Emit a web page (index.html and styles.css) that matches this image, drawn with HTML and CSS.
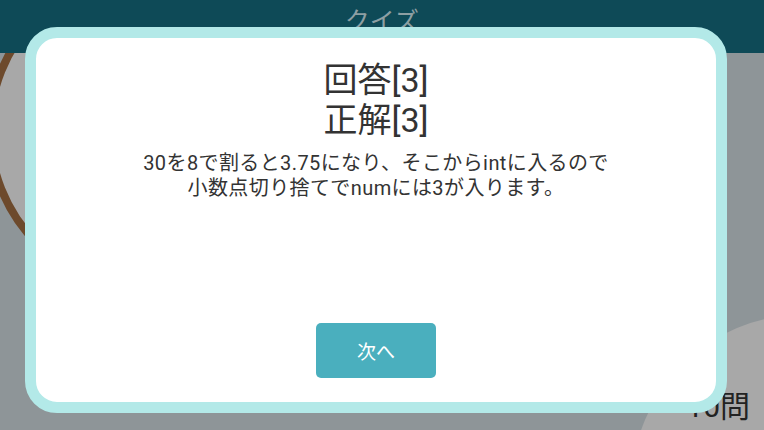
FILE: index.html
```html
<!DOCTYPE html>
<html lang="ja">
<head>
<meta charset="utf-8">
<title>クイズ</title>
<link rel="stylesheet" href="styles.css">
</head>
<body>
<div class="page">
  <header class="app-header">
    <h1 class="app-title">クイズ</h1>
  </header>
  <main class="quiz-main">
    <div class="deco-circle deco-left"></div>
    <div class="deco-circle deco-right"></div>
    <div class="count">10問</div>
  </main>
  <div class="overlay">
    <section class="modal">
      <div class="modal-inner">
        <h2 class="result">回答[3]<br>正解[3]</h2>
        <p class="explain">30を8で割ると3.75になり、そこからintに入るので<br>小数点切り捨てでnumには3が入ります。</p>
        <div class="spacer"></div>
        <button class="next-btn" type="button">次へ</button>
      </div>
    </section>
  </div>
</div>
</body>
</html>
```

FILE: styles.css
```css
* { box-sizing: border-box; }
html, body { margin: 0; padding: 0; }
body {
  width: 764px;
  height: 430px;
  overflow: hidden;
  font-family: Roboto, "Noto Sans CJK JP", sans-serif;
  background: #8e9598;
}
.page {
  position: relative;
  width: 764px;
  height: 430px;
  display: flex;
  flex-direction: column;
  overflow: hidden;
}
.app-header {
  position: relative;
  z-index: 1;
  height: 53px;
  background: #0e4a57;
  display: flex;
  justify-content: center;
  flex-shrink: 0;
}
.app-title {
  margin: 0;
  padding-top: 7px;
  font-size: 25px;
  line-height: 30px;
  font-weight: 400;
  color: #8d9fa3;
  letter-spacing: 0;
}
.quiz-main {
  position: relative;
  flex: 1;
  display: flex;
  justify-content: flex-end;
  align-items: flex-end;
  padding: 0 14px 5px 0;
}
.deco-circle {
  position: absolute;
  border-radius: 50%;
  background: #a8a8a8;
}
.deco-left {
  left: -14px;
  top: -87px;
  width: 328px;
  height: 328px;
  border: 8px solid #6d4a2c;
}
.deco-right {
  left: 632px;
  top: 262px;
  width: 340px;
  height: 340px;
}
.count {
  position: relative;
  font-size: 30px;
  line-height: 36px;
  color: #222;
}
.overlay {
  position: absolute;
  inset: 0;
  z-index: 2;
}
.modal {
  position: absolute;
  left: 25px;
  top: 27px;
  width: 702px;
  height: 386px;
  border: 11px solid #b3e9e8;
  border-radius: 32px;
  background: #fff;
}
.modal-inner {
  height: 100%;
  display: flex;
  flex-direction: column;
  align-items: center;
  padding: 22px 0 24px;
}
.result {
  margin: 0;
  font-size: 34px;
  line-height: 40px;
  font-weight: 400;
  color: #333;
  text-align: center;
}
.explain {
  margin: 11px 0 0;
  font-size: 20px;
  line-height: 25px;
  letter-spacing: 0.4px;
  color: #333;
  text-align: center;
}
.spacer { flex: 1; }
.next-btn {
  width: 120px;
  height: 55px;
  border: 0;
  border-radius: 5px;
  background: #4aafbe;
  color: #fff;
  font-family: Roboto, "Noto Sans CJK JP", sans-serif;
  font-size: 19px;
  padding: 0;
}
```
